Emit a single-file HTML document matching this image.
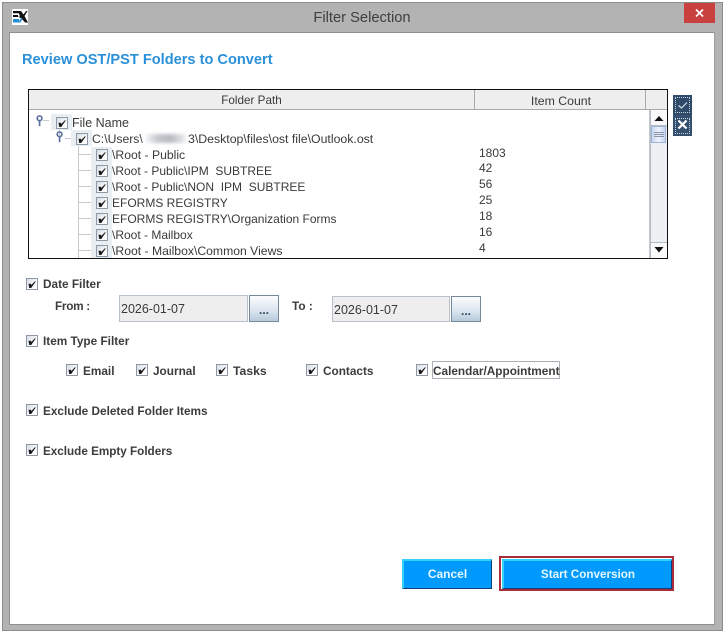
<!DOCTYPE html>
<html><head><meta charset="utf-8"><style>
html,body{margin:0;padding:0;background:#fff}
#p{position:relative;width:725px;height:635px;overflow:hidden;background:#fff;font-family:"Liberation Sans",Arial,sans-serif}
#p div,#p svg{position:absolute;box-sizing:border-box}
.t{white-space:pre;font-size:12.5px;color:#3a3a3a;line-height:16px;height:16px}
.b{white-space:pre;font-size:11.8px;font-weight:bold;color:#3c3c3c;line-height:16px;height:16px}
.c{width:12px;height:12px;border:1px solid #8f99a5;background:linear-gradient(135deg,#d5dde6,#fdfdfe 70%)}
.hl{width:21px;height:16px;background:#e9eef3}
.l{background:#c4cad0}
.inp{background:#eeeeee;border:1px solid #b9c2ca;font-size:12.5px;color:#3a3a3a;line-height:26px;padding-left:1px;white-space:pre}
.dots{background:linear-gradient(#fbfcfd,#dde7f0 55%,#b7cadb);border:1px solid #75899b;font-size:12px;font-weight:bold;color:#33475b;text-align:center;line-height:28px}
.btn{background:#0099fe;border-top:2px solid #35d0ff;border-left:2px solid #35d0ff;border-right:1px solid #0b3f78;border-bottom:1px solid #0b3f78;color:#e6f7ff;font-size:11.7px;font-weight:bold;text-align:center;line-height:27px}
</style></head><body><div id="p">
<svg width="0" height="0" style="left:0;top:0"><defs>
<symbol id="k" viewBox="0 0 13 13"><path d="M2.5 5.8 L5 5.8 L5.3 7 L9.4 2.8 L9.4 4 L5.2 10 L3.2 10 Z" fill="#1c1c1c"/></symbol>
<symbol id="n" viewBox="0 0 12 14"><circle cx="5" cy="3.5" r="2.6" fill="none" stroke="#5a6fa0" stroke-width="1.8"/><path d="M5 6v6" stroke="#5a6fa0" stroke-width="1.8"/></symbol>
</defs></svg>

<!-- window frame -->
<div style="left:2px;top:2px;width:721px;height:629px;background:#b3b3b3;border:1px solid #8d8d8d"></div>
<div style="left:9px;top:32px;width:706px;height:593px;background:#fff;border-top:1px solid #8f8f8f;border-left:1px solid #8f8f8f;border-right:1px solid #9c9c9c;border-bottom:1px solid #8f8f8f"></div>

<!-- logo -->
<div style="left:12px;top:9px;width:16px;height:16px;background:#fff"></div>
<svg style="left:12px;top:9px" width="16" height="16" viewBox="0 0 16 16"><path d="M1 2h6v2.2H1zM1 6h5v2H1z" fill="#111"/><path d="M1 10h6v3.5H1z" fill="#2a8fd0"/><path d="M6 2h3l2.5 3.5L14 2h1.5l-3 5 3.5 6.5h-3L9.5 9.5 6 7.5h2z" fill="#111"/><path d="M6 13.5l3.5-5 1 1.5-2 3.5z" fill="#2a8fd0"/></svg>

<div style="left:262px;top:9px;width:200px;text-align:center;font-size:14.7px;color:#3f3f3f;line-height:18px">Filter Selection</div>

<!-- close -->
<div style="left:684px;top:3px;width:31px;height:20px;background:#c8413f"></div>
<svg style="left:684px;top:3px" width="31" height="20"><path d="M12 6.5l7 7M19 6.5l-7 7" stroke="#fff" stroke-width="1.6" fill="none"/></svg>

<div style="left:22px;top:51px;white-space:pre;font-size:14.6px;font-weight:bold;color:#2a90d9;line-height:18px">Review OST/PST Folders to Convert</div>

<!-- table -->
<div style="left:28px;top:89px;width:640px;height:170px;background:#fff;border:1px solid #111"></div>
<div style="left:29px;top:90px;width:638px;height:20px;background:#eeeeee;border-bottom:1px solid #a9a9a9"></div>
<div style="left:474px;top:90px;width:1px;height:20px;background:#a9a9a9"></div>
<div style="left:645px;top:90px;width:1px;height:20px;background:#a9a9a9"></div>
<div class="t" style="left:29px;top:93px;width:445px;text-align:center;font-size:11.7px">Folder Path</div>
<div class="t" style="left:476px;top:93px;width:170px;text-align:center;font-size:12.3px">Item Count</div>

<!-- scrollbar -->
<div style="left:649px;top:110px;width:1px;height:148px;background:#c5c9cd"></div>
<div style="left:650px;top:110px;width:17px;height:148px;background:#eef0f3;border-left:1px solid #b4bcc4"></div>
<div style="left:651px;top:110px;width:16px;height:16px;background:#fafafa;border-bottom:1px solid #b4bcc4"></div>
<svg style="left:651px;top:110px" width="16" height="16"><path d="M3.5 11L8 6l4.5 5z" fill="#111"/></svg>
<div style="left:651px;top:126px;width:15px;height:17px;background:linear-gradient(90deg,#c4d6f2,#eef3fb 50%,#c4d6f2);border:1px solid #9db4d6"></div>
<div class="l" style="left:654px;top:132px;width:10px;height:1px;background:#8a97a8"></div>
<div class="l" style="left:654px;top:134px;width:10px;height:1px;background:#8a97a8"></div>
<div class="l" style="left:654px;top:136px;width:10px;height:1px;background:#8a97a8"></div>
<div style="left:651px;top:242px;width:16px;height:16px;background:#fafafa;border-top:1px solid #b4bcc4"></div>
<svg style="left:651px;top:242px" width="16" height="16"><path d="M3.5 5L8 10.5 12.5 5z" fill="#111"/></svg>

<!-- side buttons -->
<div style="left:673px;top:95px;width:19px;height:20px;background:#2f4b69"></div>
<div style="left:673px;top:115px;width:19px;height:21px;background:#34506e"></div>
<div style="left:675px;top:97px;width:15px;height:16px;border:1px dotted #c5d2df"></div>
<div style="left:675px;top:118px;width:15px;height:16px;border:1px dotted #c5d2df"></div>
<svg style="left:673px;top:95px" width="19" height="41"><path d="M5.5 10.5l3 2.5 5.5-5.5" stroke="#d8e2ec" stroke-width="1.2" fill="none"/><path d="M5.5 25.5l8 8M13.5 25.5l-8 8" stroke="#fff" stroke-width="2.2" fill="none"/></svg>

<!-- tree lines -->
<div class="l" style="left:43px;top:120px;width:6px;height:1px"></div>
<div class="l" style="left:59px;top:126px;width:1px;height:12px"></div>
<div class="l" style="left:65px;top:138px;width:7px;height:1px"></div>
<div class="l" style="left:78px;top:144px;width:1px;height:114px"></div>
<div class="l" style="left:79px;top:154px;width:12px;height:1px"></div>
<div class="l" style="left:79px;top:170px;width:12px;height:1px"></div>
<div class="l" style="left:79px;top:186px;width:12px;height:1px"></div>
<div class="l" style="left:79px;top:202px;width:12px;height:1px"></div>
<div class="l" style="left:79px;top:218px;width:12px;height:1px"></div>
<div class="l" style="left:79px;top:234px;width:12px;height:1px"></div>
<div class="l" style="left:79px;top:250px;width:12px;height:1px"></div>

<svg style="left:35px;top:115px" width="11" height="13" viewBox="0 0 12 14"><use href="#n"/></svg>
<svg style="left:55px;top:131px" width="11" height="13" viewBox="0 0 12 14"><use href="#n"/></svg>

<!-- tree rows -->
<div class="hl" style="left:51px;top:114px;height:16px"></div>
<div class="c" style="left:56px;top:117px"></div><svg style="left:56px;top:117px" width="13" height="13"><use href="#k"/></svg>
<div class="t" style="left:72px;top:115px">File Name</div>

<div class="hl" style="left:71px;top:130px"></div>
<div class="c" style="left:76px;top:133px"></div><svg style="left:76px;top:133px" width="13" height="13"><use href="#k"/></svg>
<div class="t" style="left:92px;top:131px;font-size:12.2px">C:\Users\</div>
<div style="left:144px;top:134px;width:44px;height:9px;background:linear-gradient(90deg,#fff,#c4c8cd 30%,#b8bcc2 60%,#dcdfe2 85%,#fff);filter:blur(1.5px)"></div>
<div class="t" style="left:188px;top:131px;font-size:12.3px">3\Desktop\files\ost file\Outlook.ost</div>

<div class="hl" style="left:91px;top:147px"></div><div class="c" style="left:96px;top:149px"></div><svg style="left:96px;top:149px" width="13" height="13"><use href="#k"/></svg>
<div class="t" style="left:112px;top:147px;font-size:12.2px">\Root - Public</div>
<div class="hl" style="left:91px;top:163px"></div><div class="c" style="left:96px;top:165px"></div><svg style="left:96px;top:165px" width="13" height="13"><use href="#k"/></svg>
<div class="t" style="left:112px;top:163px;font-size:12px">\Root - Public\IPM  SUBTREE</div>
<div class="hl" style="left:91px;top:179px"></div><div class="c" style="left:96px;top:181px"></div><svg style="left:96px;top:181px" width="13" height="13"><use href="#k"/></svg>
<div class="t" style="left:112px;top:179px;font-size:12px">\Root - Public\NON  IPM  SUBTREE</div>
<div class="hl" style="left:91px;top:195px"></div><div class="c" style="left:96px;top:197px"></div><svg style="left:96px;top:197px" width="13" height="13"><use href="#k"/></svg>
<div class="t" style="left:112px;top:195px;font-size:12px">EFORMS REGISTRY</div>
<div class="hl" style="left:91px;top:211px"></div><div class="c" style="left:96px;top:213px"></div><svg style="left:96px;top:213px" width="13" height="13"><use href="#k"/></svg>
<div class="t" style="left:112px;top:211px;font-size:12px">EFORMS REGISTRY\Organization Forms</div>
<div class="hl" style="left:91px;top:227px"></div><div class="c" style="left:96px;top:229px"></div><svg style="left:96px;top:229px" width="13" height="13"><use href="#k"/></svg>
<div class="t" style="left:112px;top:227px;font-size:12px">\Root - Mailbox</div>
<div class="hl" style="left:91px;top:243px;height:15px"></div><div class="c" style="left:96px;top:245px"></div><svg style="left:96px;top:245px" width="13" height="13"><use href="#k"/></svg>
<div style="left:112px;top:243px;width:200px;height:15px;overflow:hidden"><div class="t" style="left:0;top:0;font-size:12.2px">\Root - Mailbox\Common Views</div></div>

<!-- counts -->
<div class="t" style="left:479px;top:145px;font-size:12px">1803</div>
<div class="t" style="left:479px;top:160px;font-size:12px">42</div>
<div class="t" style="left:479px;top:176px;font-size:12px">56</div>
<div class="t" style="left:479px;top:192px;font-size:12px">25</div>
<div class="t" style="left:479px;top:208px;font-size:12px">18</div>
<div class="t" style="left:479px;top:224px;font-size:12px">16</div>
<div class="t" style="left:479px;top:240px;font-size:12px">4</div>

<!-- date filter -->
<div class="c" style="left:26px;top:278px"></div><svg style="left:26px;top:278px" width="13" height="13"><use href="#k"/></svg>
<div class="b" style="left:43px;top:276px">Date Filter</div>
<div class="b" style="left:55px;top:298px;letter-spacing:-.3px">From :</div>
<div class="inp" style="left:119px;top:295px;width:129px;height:27px">2026-01-07</div>
<div class="dots" style="left:249px;top:295px;width:30px;height:27px">...</div>
<div class="b" style="left:292px;top:298px">To :</div>
<div class="inp" style="left:332px;top:296px;width:118px;height:26px">2026-01-07</div>
<div class="dots" style="left:451px;top:296px;width:30px;height:26px">...</div>

<!-- item type -->
<div class="c" style="left:26px;top:335px"></div><svg style="left:26px;top:335px" width="13" height="13"><use href="#k"/></svg>
<div class="b" style="left:43px;top:333px">Item Type Filter</div>

<div class="c" style="left:66px;top:364px"></div><svg style="left:66px;top:364px" width="13" height="13"><use href="#k"/></svg>
<div class="b" style="left:83px;top:363px">Email</div>
<div class="c" style="left:136px;top:364px"></div><svg style="left:136px;top:364px" width="13" height="13"><use href="#k"/></svg>
<div class="b" style="left:153px;top:363px">Journal</div>
<div class="c" style="left:216px;top:364px"></div><svg style="left:216px;top:364px" width="13" height="13"><use href="#k"/></svg>
<div class="b" style="left:233px;top:363px;font-size:12.2px">Tasks</div>
<div class="c" style="left:306px;top:364px"></div><svg style="left:306px;top:364px" width="13" height="13"><use href="#k"/></svg>
<div class="b" style="left:323px;top:363px">Contacts</div>
<div class="c" style="left:416px;top:364px"></div><svg style="left:416px;top:364px" width="13" height="13"><use href="#k"/></svg>
<div style="left:432px;top:361px;width:128px;height:18px;border:1px solid #a9b0b8"></div>
<div class="b" style="left:433px;top:363px">Calendar/Appointment</div>

<div class="c" style="left:26px;top:404px"></div><svg style="left:26px;top:404px" width="13" height="13"><use href="#k"/></svg>
<div class="b" style="left:43px;top:403px">Exclude Deleted Folder Items</div>
<div class="c" style="left:26px;top:444px"></div><svg style="left:26px;top:444px" width="13" height="13"><use href="#k"/></svg>
<div class="b" style="left:43px;top:444px;font-size:11.7px">Exclude Empty Folders</div>

<!-- buttons -->
<div class="btn" style="left:402px;top:559px;width:90px;height:30px;font-size:12px">Cancel</div>
<div style="left:499px;top:556px;width:175px;height:35px;border:2px solid #a82c3c"></div>
<div class="btn" style="left:502px;top:559px;width:170px;height:30px;padding-left:1px">Start Conversion</div>
</div></body></html>
